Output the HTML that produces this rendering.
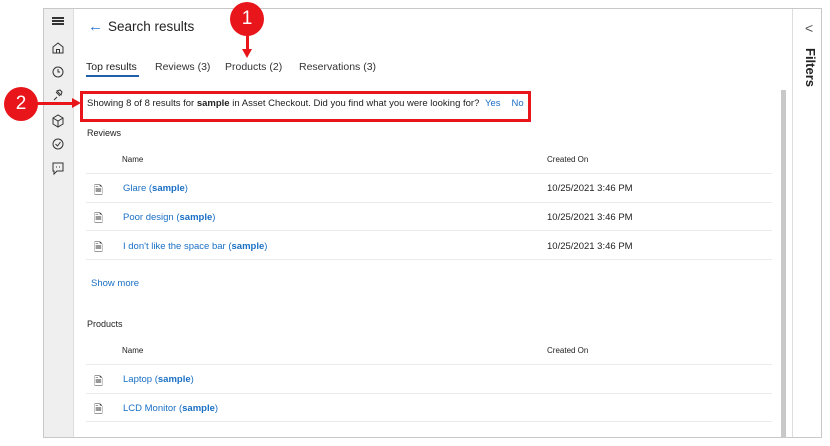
<!DOCTYPE html>
<html><head><style>
body{margin:0;width:830px;height:446px;background:#fff;font-family:"Liberation Sans",sans-serif;position:relative;overflow:hidden;color:#222}
.a{position:absolute;white-space:nowrap}
.frame{left:43px;top:8px;width:779px;height:430px;border:1px solid #c8c8c8;box-sizing:border-box}
.nav{left:44px;top:9px;width:29px;height:428px;background:#efefef;border-right:1px solid #ddd}
.t{font-size:9.5px}
.tab{font-size:10.5px}
.link{color:#1a6fc4}
.hr{height:1px;background:#ebebeb;left:86px;width:686px}
.ic{font-size:11px;color:#333}
</style></head><body>
<div class="a frame"></div>
<div class="a nav"></div>
<div class="a" style="left:792px;top:9px;width:1px;height:428px;background:#ddd"></div>
<div class="a" style="left:781px;top:90px;width:5px;height:347px;background:#c8c8c8"></div>
<div class="a" style="left:805px;top:20px;font-size:14px;color:#555">&lt;</div>
<div class="a" style="top:48px;font-size:13px;font-weight:bold;transform:rotate(90deg);transform-origin:left top;left:818px">Filters</div>
<div class="a" style="left:52px;top:17px;width:12px;height:1.5px;background:#333;box-shadow:0 3px 0 #333,0 6px 0 #333"></div>
<svg class="a" style="left:51px;top:41px" width="14" height="140" fill="none" stroke="#333" stroke-width="1">
<path d="M2 6L7 2L12 6V12H2Z M5.5 12V8.5H8.5V12"/>
<circle cx="7" cy="31" r="5"/><path d="M7 28V31H9"/>
<path d="M5 51L9 55M3 59L6 56M6 50L10 54L11 51L9 49Z"/>
<path d="M2 77L7 74L12 77V83L7 86L2 83Z M2 77L7 80L12 77M7 80V86"/>
<circle cx="7" cy="103" r="5"/><path d="M4.5 103L6.5 105L9.5 101"/>
<path d="M2 122H12V130H6L3 133V130H2Z"/><path d="M5 126H6M8 126H9"/>
</svg>
<div class="a" style="left:88px;top:18px;font-size:15px;color:#2a74d0">←</div>
<div class="a" style="left:108px;top:19px;font-size:13.5px;color:#222">Search results</div>
<div class="a tab" style="left:86px;top:61px;color:#222">Top results</div>
<div class="a" style="left:86px;top:75px;width:53px;height:2px;background:#1f5fa8"></div>
<div class="a tab" style="left:155px;top:61px;color:#333">Reviews (3)</div>
<div class="a tab" style="left:225px;top:61px;color:#333">Products (2)</div>
<div class="a tab" style="left:299px;top:61px;color:#333">Reservations (3)</div>
<div class="a" style="left:230px;top:2px;width:34px;height:34px;border-radius:50%;background:#e8161b;color:#fff;font-size:19px;text-align:center;line-height:34px">1</div>
<div class="a" style="left:246px;top:35px;width:3px;height:15px;background:#e8161b"></div>
<div class="a" style="left:242px;top:49px;width:0;height:0;border-left:5.5px solid transparent;border-right:5.5px solid transparent;border-top:9px solid #e8161b"></div>
<div class="a" style="left:4px;top:87px;width:34px;height:34px;border-radius:50%;background:#e8161b;color:#fff;font-size:19px;text-align:center;line-height:34px">2</div>
<div class="a" style="left:37px;top:102px;width:36px;height:3px;background:#e8161b"></div>
<div class="a" style="left:72px;top:98px;width:0;height:0;border-top:5.5px solid transparent;border-bottom:5.5px solid transparent;border-left:9px solid #e8161b"></div>
<div class="a" style="left:80px;top:91px;width:451px;height:31px;border:3px solid #e8161b;box-sizing:border-box"></div>
<div class="a" style="left:87px;top:98px;font-size:9.5px">Showing 8 of 8 results for <b>sample</b> in Asset Checkout. Did you find what you were looking for? <span class="link" style="margin-left:3px">Yes</span><span class="link" style="margin-left:11px">No</span></div>
<div class="a" style="left:87px;top:128px;font-size:9px">Reviews</div>
<div class="a" style="left:122px;top:155px;font-size:8px">Name</div>
<div class="a" style="left:547px;top:155px;font-size:8px">Created On</div>
<div class="a hr" style="top:173px"></div>
<div class="a ic" style="left:94px;top:182px">🗎</div>
<div class="a t link" style="left:123px;top:183px">Glare (<b>sample</b>)</div>
<div class="a t" style="left:547px;top:183px">10/25/2021 3:46 PM</div>
<div class="a hr" style="top:202px"></div>
<div class="a ic" style="left:94px;top:210px">🗎</div>
<div class="a t link" style="left:123px;top:212px">Poor design (<b>sample</b>)</div>
<div class="a t" style="left:547px;top:212px">10/25/2021 3:46 PM</div>
<div class="a hr" style="top:230px"></div>
<div class="a ic" style="left:94px;top:239px">🗎</div>
<div class="a t link" style="left:123px;top:241px">I don't like the space bar (<b>sample</b>)</div>
<div class="a t" style="left:547px;top:241px">10/25/2021 3:46 PM</div>
<div class="a hr" style="top:259px"></div>
<div class="a t link" style="left:91px;top:278px">Show more</div>
<div class="a" style="left:87px;top:319px;font-size:9px">Products</div>
<div class="a" style="left:122px;top:346px;font-size:8px">Name</div>
<div class="a" style="left:547px;top:346px;font-size:8px">Created On</div>
<div class="a hr" style="top:364px"></div>
<div class="a ic" style="left:94px;top:373px">🗎</div>
<div class="a t link" style="left:123px;top:374px">Laptop (<b>sample</b>)</div>
<div class="a hr" style="top:393px"></div>
<div class="a ic" style="left:94px;top:401px">🗎</div>
<div class="a t link" style="left:123px;top:403px">LCD Monitor (<b>sample</b>)</div>
<div class="a hr" style="top:421px"></div>
</body></html>
